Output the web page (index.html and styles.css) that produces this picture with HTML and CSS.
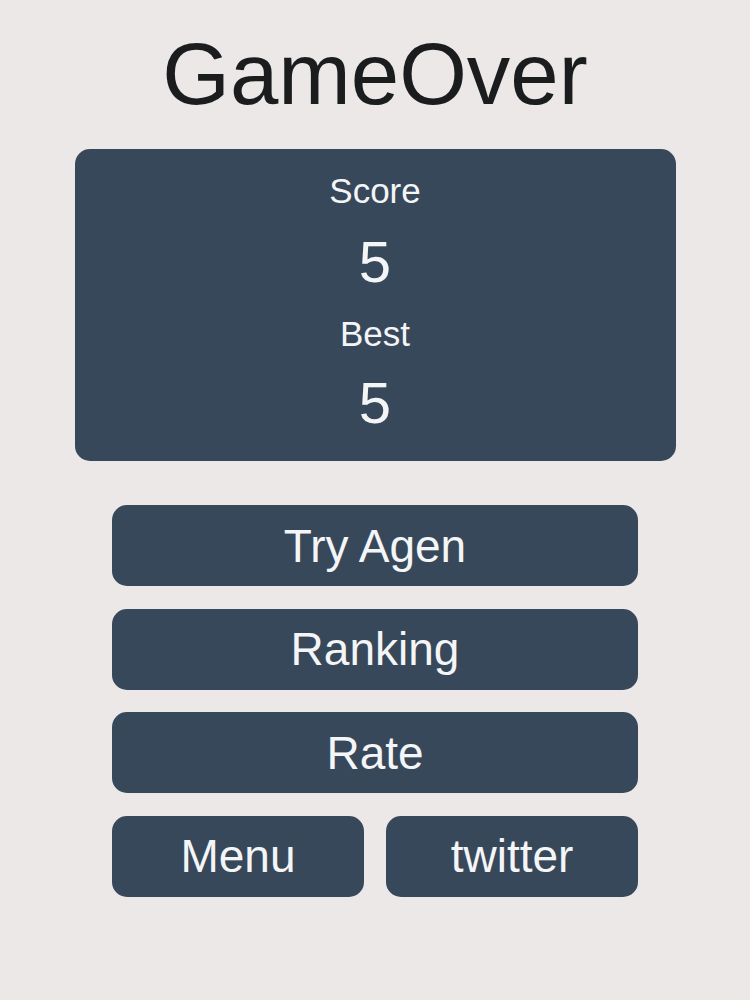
FILE: index.html
```html
<!DOCTYPE html>
<html>
<head>
<meta charset="utf-8">
<link rel="stylesheet" href="styles.css">
</head>
<body>
<main class="screen">
  <h1 class="title">GameOver</h1>
  <section class="panel">
    <div class="label label-score">Score</div>
    <div class="value value-score">5</div>
    <div class="label label-best">Best</div>
    <div class="value">5</div>
  </section>
  <nav class="actions">
    <div class="btn">Try Agen</div>
    <div class="btn">Ranking</div>
    <div class="btn">Rate</div>
    <div class="row">
      <div class="btn">Menu</div>
      <div class="btn">twitter</div>
    </div>
  </nav>
</main>
</body>
</html>
```

FILE: styles.css
```css
html, body {
  margin: 0;
  padding: 0;
  background: #ebe8e7;
}
body {
  font-family: "Liberation Sans", Arial, sans-serif;
  width: 750px;
  height: 1000px;
  overflow: hidden;
}
.screen {
  display: flex;
  flex-direction: column;
  align-items: center;
}
.title {
  margin: 24px 0 0;
  font-size: 87px;
  line-height: 100px;
  font-weight: normal;
  color: #1b1c1e;
}
.panel {
  margin-top: 25px;
  width: 601px;
  box-sizing: border-box;
  padding: 22px 0 28px;
  background: #38485b;
  border-radius: 15px;
  display: flex;
  flex-direction: column;
  align-items: center;
  color: #f4f5f6;
}
.label {
  font-size: 35px;
  line-height: 40px;
}
.value {
  font-size: 58px;
  line-height: 60px;
}
.label-score { margin-bottom: 21px; }
.value-score { margin-bottom: 22px; }
.label-best { margin-bottom: 19px; }
.actions {
  margin-top: 44px;
  width: 526px;
  display: flex;
  flex-direction: column;
  gap: 22.5px;
}
.row {
  display: flex;
  gap: 22px;
}
.row .btn { flex: 1; }
.btn {
  height: 81px;
  background: #38485b;
  border-radius: 15px;
  color: #f4f5f6;
  font-size: 46px;
  display: flex;
  align-items: center;
  justify-content: center;
}
```
